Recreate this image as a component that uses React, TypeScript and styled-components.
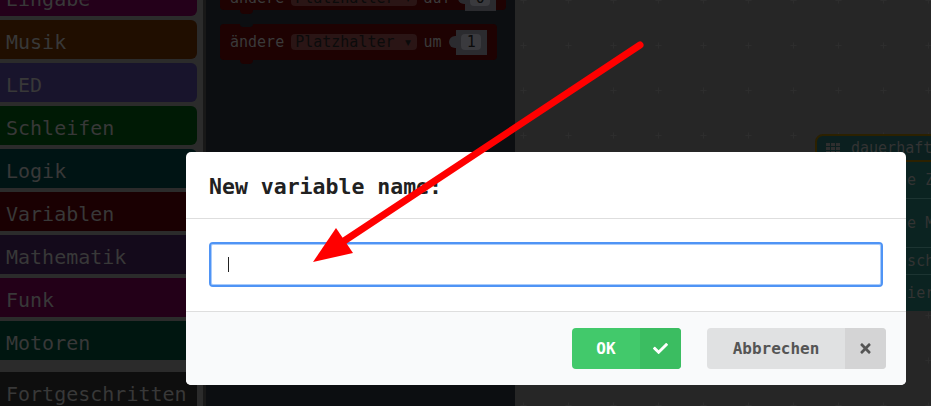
import styled, { createGlobalStyle } from 'styled-components';
import { FaCheck, FaTimes } from 'react-icons/fa';

const mono = `"DejaVu Sans Mono", "Liberation Mono", monospace`;

const GlobalStyle = createGlobalStyle`
  html, body {
    margin: 0;
    padding: 0;
    background: #262626;
    overflow: hidden;
  }
  * {
    box-sizing: border-box;
  }
`;

const Page = styled.div`
  position: relative;
  width: 931px;
  height: 406px;
  display: flex;
  overflow: hidden;
  font-family: ${mono};
`;

/* toolbox */
const Sidebar = styled.div`
  width: 203px;
  flex-shrink: 0;
  background: #2b2b2b;
  display: flex;
  flex-direction: column;
  gap: 4px;
  margin-top: -23px;
`;
const Category = styled.div<{ $color: string }>`
  width: 197px;
  height: 39px;
  flex-shrink: 0;
  display: flex;
  align-items: center;
  padding: 5px 0 0 6px;
  background: ${(p) => p.$color};
  border-radius: 0 6px 6px 0;
  color: #383838;
  font-size: 20px;
  white-space: nowrap;
`;
const Advanced = styled(Category)`
  margin-top: 8px;
  border-radius: 0;
`;

/* flyout */
const Flyout = styled.div`
  width: 312px;
  flex-shrink: 0;
  background: #0c0e11;
  border-left: 3px solid #181818;
  padding-left: 14px;
`;
const BlockList = styled.div`
  display: flex;
  flex-direction: column;
  align-items: flex-start;
  gap: 14px;
  margin-top: -26px;
`;
const Block = styled.div<{ $shift?: number }>`
  position: relative;
  height: 36px;
  display: flex;
  align-items: center;
  gap: 7px;
  padding: ${(p) => p.$shift ?? 0}px 10px 0;
  background: #1e0202;
  border-radius: 4px;
  color: #3a3a3a;
  font-size: 15px;
  white-space: nowrap;
  &::before {
    content: '';
    position: absolute;
    top: 0;
    left: 20px;
    width: 13px;
    height: 3px;
    background: #0c0e11;
    border-radius: 0 0 4px 4px;
  }
  &::after {
    content: '';
    position: absolute;
    bottom: -4px;
    left: 20px;
    width: 13px;
    height: 4px;
    background: #1e0202;
    border-radius: 0 0 4px 4px;
  }
`;
const Dropdown = styled.span`
  height: 16px;
  line-height: 16px;
  padding: 0 4px;
  background: #2a1515;
  border-radius: 4px;
  color: #0b0b0b;
`;
const Socket = styled.span`
  position: relative;
  width: 31px;
  height: 25px;
  margin-left: 7px;
  display: flex;
  align-items: center;
  justify-content: center;
  background: #2b2b2f;
  &::before {
    content: '';
    position: absolute;
    left: -7px;
    top: 6px;
    width: 8px;
    height: 12px;
    background: #2b2b2f;
    border-radius: 6px 0 0 6px;
  }
`;
const NumberPill = styled.span`
  width: 20px;
  height: 16px;
  line-height: 16px;
  text-align: center;
  background: #3a3a3e;
  border-radius: 4px;
  color: #0b0b0b;
`;

/* workspace */
const grid = encodeURIComponent(
  '<svg xmlns="http://www.w3.org/2000/svg" width="45" height="45"><path d="M19.5 22.5h6M22.5 19.5v6" stroke="#2d2d2d" stroke-width="1"/></svg>'
);
const Workspace = styled.div`
  position: relative;
  flex: 1;
  background-color: #262626;
  background-image: url("data:image/svg+xml,${grid}");
  background-position: -14.5px -22.5px;
`;
const HatBlock = styled.div`
  position: absolute;
  left: 300px;
  top: 134px;
  width: 300px;
  height: 28px;
  display: flex;
  align-items: center;
  gap: 11px;
  padding-left: 9px;
  background: #0b1f1f;
  border: 2px solid #2c2100;
  border-radius: 8px 0 0 0;
  color: #333;
  font-size: 15px;
`;
const Stack = styled.div`
  position: absolute;
  left: 340px;
  top: 161px;
  width: 200px;
  display: flex;
  flex-direction: column;
  background: #0b2321;
  border-top: 1px solid #2c2100;
`;
const StackRow = styled.div<{ $h: number }>`
  height: ${(p) => p.$h}px;
  display: flex;
  align-items: center;
  padding-left: 16px;
  color: #333;
  font-size: 15px;
  white-space: nowrap;
  & + & {
    border-top: 1px solid #1d3432;
  }
`;

/* dialog */
const Dialog = styled.div`
  position: absolute;
  left: 186px;
  top: 152px;
  width: 720px;
  background: #fff;
  border-radius: 5px;
  overflow: hidden;
`;
const Header = styled.div`
  height: 67px;
  display: flex;
  align-items: center;
  padding: 2px 23px 0;
  border-bottom: 1px solid #dedede;
  color: #212121;
  font-size: 21.5px;
  font-weight: bold;
`;
const Body = styled.div`
  padding: 23px 23px 24px;
`;
const InputWrap = styled.div`
  position: relative;
`;
const NameInput = styled.input`
  display: block;
  width: 100%;
  height: 45px;
  padding: 0 17px;
  border: 2px solid #4f94f5;
  border-radius: 4px;
  outline: none;
  box-shadow: inset 0 0 0 1px #a9cbfa;
  font-family: ${mono};
  font-size: 18px;
  caret-color: transparent;
`;
const Caret = styled.span`
  position: absolute;
  left: 19px;
  top: 15px;
  width: 1px;
  height: 15px;
  background: #222;
`;
const Footer = styled.div`
  height: 74px;
  display: flex;
  justify-content: flex-end;
  align-items: center;
  gap: 26px;
  padding: 0 20px;
  background: #f9fafb;
  border-top: 1px solid #dedede;
`;
const Button = styled.button<{ $variant: 'ok' | 'cancel' }>`
  display: flex;
  height: 41px;
  padding: 0;
  border: none;
  border-radius: 4px;
  overflow: hidden;
  font-family: ${mono};
  font-size: 16px;
  font-weight: bold;
  cursor: pointer;
  background: ${(p) => (p.$variant === 'ok' ? '#42c96b' : '#e0e1e2')};
  color: ${(p) => (p.$variant === 'ok' ? '#fff' : '#555')};
`;
const Label = styled.span<{ $w: number }>`
  width: ${(p) => p.$w}px;
  display: flex;
  align-items: center;
  justify-content: center;
`;
const IconPart = styled.span<{ $bg: string }>`
  width: 41px;
  display: flex;
  align-items: center;
  justify-content: center;
  background: ${(p) => p.$bg};
  font-size: 15px;
`;

const Arrow = styled.svg`
  position: absolute;
  left: 0;
  top: 0;
  pointer-events: none;
`;

const categories = [
  { name: 'Eingabe', color: '#24001a' },
  { name: 'Musik', color: '#200e00' },
  { name: 'LED', color: '#18142c' },
  { name: 'Schleifen', color: '#001a05' },
  { name: 'Logik', color: '#001414' },
  { name: 'Variablen', color: '#1a0002' },
  { name: 'Mathematik', color: '#140a1b' },
  { name: 'Funk', color: '#230018' },
  { name: 'Motoren', color: '#001610' },
];

const GridIcon = () => (
  <svg width="14" height="11" viewBox="0 0 14 11">
    {[0, 1, 2].map((r) =>
      [0, 1, 2].map((c) => <rect key={`${r}${c}`} x={c * 5} y={r * 4} width="4" height="3" fill="#2e2e2e" />)
    )}
  </svg>
);

export default function App() {
  return (
    <>
      <GlobalStyle />
      <Page>
        <Sidebar>
          {categories.map((c) => (
            <Category key={c.name} $color={c.color}>
              {c.name}
            </Category>
          ))}
          <Advanced $color="#0e0e0e">Fortgeschritten</Advanced>
        </Sidebar>
        <Flyout>
          <BlockList>
            <Block $shift={12}>
              ändere<Dropdown>Platzhalter ▾</Dropdown>auf
              <Socket>
                <NumberPill>0</NumberPill>
              </Socket>
            </Block>
            <Block>
              ändere<Dropdown>Platzhalter ▾</Dropdown>um
              <Socket>
                <NumberPill>1</NumberPill>
              </Socket>
            </Block>
          </BlockList>
        </Flyout>
        <Workspace>
          <HatBlock>
            <GridIcon />
            dauerhaft
          </HatBlock>
          <Stack>
            <StackRow $h={36}>zeige Zahl</StackRow>
            <StackRow $h={49}>zeige Muster</StackRow>
            <StackRow $h={27}>Bildschirm</StackRow>
            <StackRow $h={37}>pausiere</StackRow>
          </Stack>
        </Workspace>

        <Dialog>
          <Header>New variable name:</Header>
          <Body>
            <InputWrap>
              <NameInput type="text" />
              <Caret />
            </InputWrap>
          </Body>
          <Footer>
            <Button $variant="ok">
              <Label $w={68}>OK</Label>
              <IconPart $bg="#3bbd61">
                <FaCheck />
              </IconPart>
            </Button>
            <Button $variant="cancel">
              <Label $w={138}>Abbrechen</Label>
              <IconPart $bg="#d4d4d5">
                <FaTimes />
              </IconPart>
            </Button>
          </Footer>
        </Dialog>

        <Arrow width="931" height="406" viewBox="0 0 931 406">
          <line x1="640" y1="45" x2="344" y2="241" stroke="#ff0000" strokeWidth="7" strokeLinecap="round" />
          <polygon points="313,262 336,228 353,253" fill="#ff0000" />
        </Arrow>
      </Page>
    </>
  );
}
